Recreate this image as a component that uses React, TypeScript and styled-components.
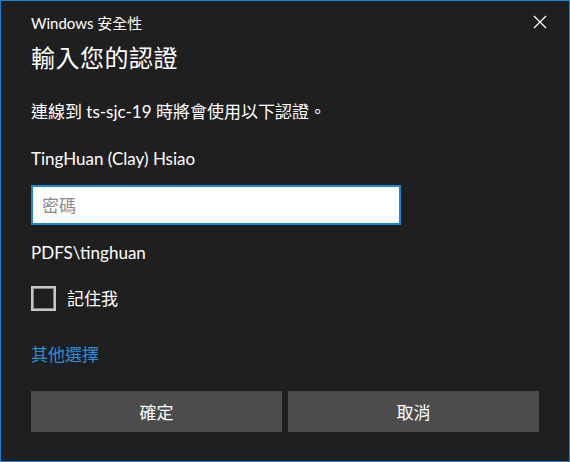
import styled, { createGlobalStyle } from 'styled-components'

const GlobalStyle = createGlobalStyle`
  html, body {
    margin: 0;
    padding: 0;
    background: #1f1f1f;
  }
  * {
    box-sizing: border-box;
  }
`

const FONT = `Lato, 'Noto Sans CJK TC', sans-serif`

const Window = styled.div`
  width: 570px;
  height: 462px;
  background: #1f1f1f;
  border: 1px solid #1a80d2;
  color: #ffffff;
  font-family: ${FONT};
  display: flex;
  flex-direction: column;
`

const TitleBar = styled.div`
  display: flex;
  align-items: center;
  justify-content: space-between;
  height: 42px;
  padding: 0 14px 0 30px;
`

const TitleText = styled.div`
  font-size: 15px;
  color: #ffffff;
`

const CloseButton = styled.button`
  width: 30px;
  height: 30px;
  border: none;
  background: transparent;
  display: flex;
  align-items: center;
  justify-content: center;
  padding: 0;
  cursor: pointer;
`

const Body = styled.div`
  display: flex;
  flex-direction: column;
  padding: 0 30px;
`

const Heading = styled.h1`
  margin: 0;
  font-size: 24px;
  font-weight: 400;
  line-height: 30px;
  letter-spacing: 0.5px;
`

const Text = styled.div<{ $top: number }>`
  margin-top: ${p => p.$top}px;
  font-size: 17px;
  line-height: 22px;
`

const PasswordInput = styled.input`
  margin-top: 15px;
  width: 370px;
  height: 40px;
  border: 2px solid #1a86d5;
  background: #ffffff;
  padding: 0 9px;
  font-family: ${FONT};
  font-size: 17px;
  color: #000;
  outline: none;
  caret-color: #000;

  &::placeholder {
    color: #8a8a8a;
  }
`

const CheckRow = styled.label`
  display: flex;
  align-items: center;
  gap: 11px;
  margin-top: 22px;
  font-size: 17px;
  line-height: 22px;
  cursor: pointer;
`

const CheckBox = styled.span`
  flex: none;
  width: 25px;
  height: 25px;
  border: 2px solid #c8c8c8;
  box-shadow: inset 0 0 0 1px #858585;
  background: #1f1f1f;
`

const MoreLink = styled.a`
  margin-top: 33px;
  font-size: 17px;
  line-height: 22px;
  color: #2b8fd6;
  text-decoration: none;
  align-self: flex-start;
`

const ButtonRow = styled.div`
  display: grid;
  grid-template-columns: 251px 251px;
  gap: 6px;
  margin-top: 25px;
`

const ActionButton = styled.button`
  height: 41px;
  border: none;
  background: #4c4c4c;
  color: #ffffff;
  font-family: ${FONT};
  font-size: 17px;
  cursor: pointer;
`

export default function App() {
  return (
    <>
      <GlobalStyle />
      <Window>
        <TitleBar>
          <TitleText>Windows 安全性</TitleText>
          <CloseButton aria-label="關閉">
            <svg width="14" height="14" viewBox="0 0 14 14">
              <path d="M1 1 L13 13 M13 1 L1 13" stroke="#ffffff" strokeWidth="1.3" />
            </svg>
          </CloseButton>
        </TitleBar>
        <Body>
          <Heading>輸入您的認證</Heading>
          <Text $top={28}>連線到 ts-sjc-19 時將會使用以下認證。</Text>
          <Text $top={25}>TingHuan (Clay) Hsiao</Text>
          <PasswordInput type="password" placeholder="密碼" autoFocus />
          <Text $top={17}>PDFS\tinghuan</Text>
          <CheckRow>
            <CheckBox />
            記住我
          </CheckRow>
          <MoreLink href="#">其他選擇</MoreLink>
          <ButtonRow>
            <ActionButton>確定</ActionButton>
            <ActionButton>取消</ActionButton>
          </ButtonRow>
        </Body>
      </Window>
    </>
  )
}
